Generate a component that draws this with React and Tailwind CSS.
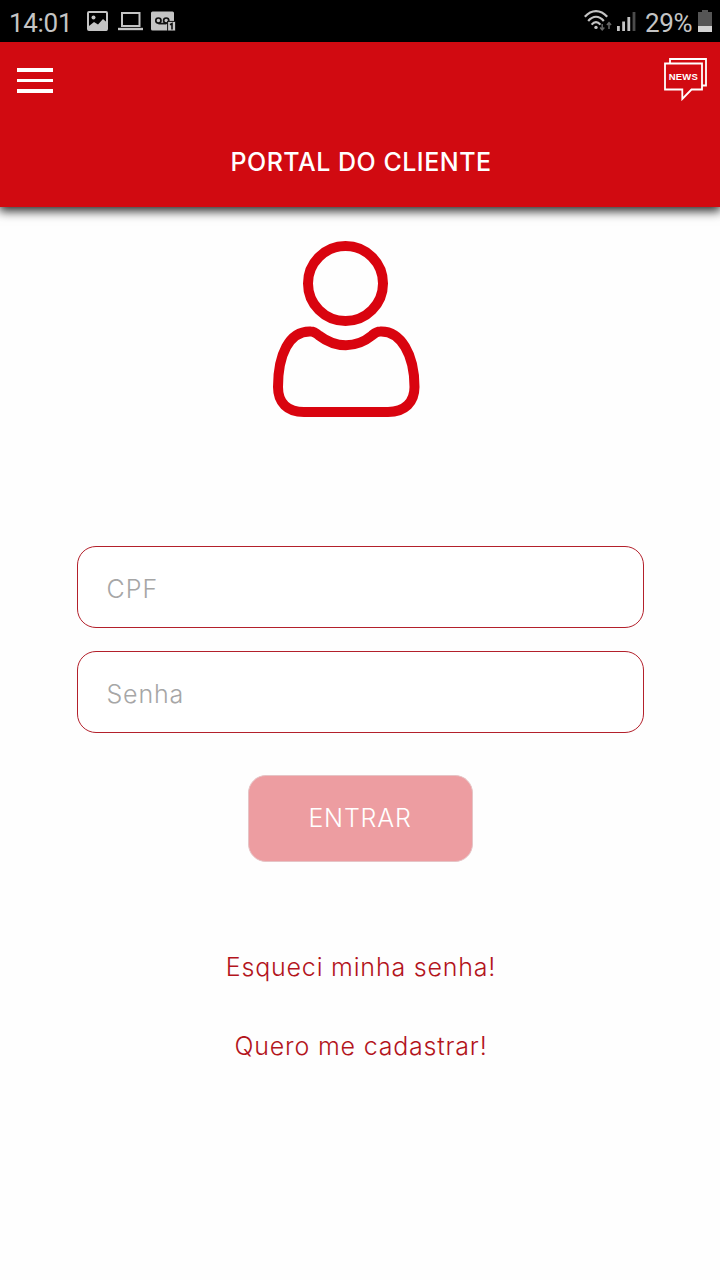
import React, { useState } from 'react';

const StatusBar = () => {
  return (
    <div className="h-[42px] bg-black text-[#c4c4c4] flex items-center justify-between pl-[9px] pr-2 font-[Roboto,sans-serif]">
      <div className="flex items-center">
        <span className="w-[66px] text-[26px] leading-[42px] tracking-[-0.3px] whitespace-nowrap pt-[3px]">14:01</span>
        {/* Picture */}
        <svg className="ml-3 w-[21px] h-5" viewBox="0 0 21 20" fill="none">
          <rect x="1" y="1" width="19" height="18" rx="1" stroke="currentColor" strokeWidth="2" />
          <circle cx="6.5" cy="6.5" r="2" fill="currentColor" />
          <path d="M2 15l5-4 4 2.500 5-5.500 4 3.500v8H2z" fill="currentColor" />
        </svg>
        {/* Laptop */}
        <svg className="ml-2.5 w-[25px] h-5" viewBox="0 0 25 20" fill="none" stroke="currentColor">
          <rect x="4" y="2" width="17.5" height="13" strokeWidth="2" />
          <path d="M0 18h25" strokeWidth="2.4" />
        </svg>
        {/* Voicemail */}
        <svg className="ml-2 w-[25px] h-5" viewBox="0 0 25 20" fill="none">
          <rect x="0" y="0.5" width="23" height="19" rx="1.5" fill="currentColor" />
          <g stroke="#111" strokeWidth="1.7">
            <circle cx="7.4" cy="9.6" r="2.6" />
            <circle cx="15.2" cy="9.6" r="2.6" />
            <path d="M7.4 12.6h8" />
          </g>
          <rect x="16.6" y="10.4" width="8" height="9.6" fill="currentColor" stroke="#111" strokeWidth="1" />
          <path d="M19 13.8l2-1.2v6" stroke="#111" strokeWidth="1.6" />
        </svg>
      </div>

      <div className="flex items-center">
        {/* Wifi */}
        <svg className="w-[28px] h-[22px]" viewBox="0 0 28 22" fill="none" stroke="currentColor" strokeWidth="2.2">
          <path d="M0.8 6.8C7.5-0.8 16.5-0.8 23.2 6.8" />
          <path d="M4.2 11C9 5.3 15 5.3 19.8 11" />
          <path d="M7.6 14.6c2.8-3.2 6-3.2 8.8 0" />
          <circle cx="12" cy="17.4" r="1.7" fill="currentColor" stroke="none" />
          <path d="M18.2 14v6M16.1 17.6l2.1 2.3 2.1-2.3M25 19v-6M22.9 15l2.1-2.3 2.1 2.3" stroke="#666" strokeWidth="1.5" />
        </svg>
        {/* Signal */}
        <svg className="ml-[5px] mr-0.5 w-[19px] h-5" viewBox="0 0 19 20" fill="currentColor">
          <rect x="0" y="15" width="2.8" height="5" />
          <rect x="5.2" y="10.5" width="2.8" height="9.5" />
          <rect x="10.4" y="6" width="2.8" height="14" />
          <rect x="15.6" y="1" width="2.8" height="19" fill="#4b4b4b" />
        </svg>
        <span className="ml-[7px] w-[49px] text-[26px] leading-[42px] tracking-[-0.3px] whitespace-nowrap pt-[3px]">29%</span>
        {/* Battery */}
        <svg className="ml-1 w-3.5 h-[22px]" viewBox="0 0 14 22">
          <path d="M4 0h6v2h4v20H0V2h4z" fill="#555" />
          <rect x="0" y="16" width="14" height="6" fill="#d2d2d2" />
        </svg>
      </div>
    </div>
  );
};

const NewsIcon = () => (
  <svg className="w-[43px] h-[44px]" viewBox="0 0 43 44" fill="none" stroke="#fff" strokeWidth="1.8">
    <path d="M6 6V2h36v26.500h-4" />
    <path d="M1 6.500h37v26H27.500L18.300 42v-9.500H1z" />
    <text x="19.3" y="23" textAnchor="middle" textLength="29" fontSize="9.5" fontWeight="700" fontFamily="Liberation Sans, sans-serif" fill="#fff" stroke="none">
      NEWS
    </text>
  </svg>
);

const Header = () => {
  return (
    <header className="h-[165px] bg-[#d10a11] shadow-[0_3px_10px_1px_rgba(0,0,0,0.85)]">
      <div className="flex items-start justify-between pl-[17px] pr-[13px] pt-[15px]">
        <button aria-label="Menu" className="mt-[11px] flex flex-col gap-[7px]">
          <span className="block w-9 h-[3.5px] bg-white"></span>
          <span className="block w-9 h-[3.5px] bg-white"></span>
          <span className="block w-9 h-[3.5px] bg-white"></span>
        </button>
        <button aria-label="News">
          <NewsIcon />
        </button>
      </div>
      <h1 className="mt-[43px] text-center text-white text-[25px] leading-9 font-medium whitespace-nowrap tracking-[0.5px] pl-0.5">
        PORTAL DO CLIENTE
      </h1>
    </header>
  );
};

const inputClass =
  'w-full h-[82px] rounded-[19px] border-[1.5px] border-[#b3202b] bg-white px-[29px] pt-[3px] text-[25px] font-[330] text-gray-700 placeholder:text-[#a6a6a6] outline-none';

const linkClass = 'text-[25px] leading-9 font-[350] text-[#b3141c] whitespace-nowrap tracking-[0.8px] pl-0.5';

const App = () => {
  const [cpf, setCpf] = useState('');
  const [senha, setSenha] = useState('');

  return (
    <div className="w-[720px] h-[1280px] bg-[#fefefe] overflow-hidden font-[Inter,sans-serif]">
      <StatusBar />
      <Header />

      <main className="flex flex-col items-center">
        {/* User icon */}
        <svg className="mt-[34px] mr-[27px] w-[148px] h-[178px]" viewBox="0 0 148 178" fill="none" stroke="#d9040f" strokeWidth="10">
          <circle cx="72.5" cy="42.5" r="37.5" />
          <path d="M38 90.500C16 89.500 5 114 5 146c0 15 9 25 26 25h84c17 0 26.500-10 26.500-25 0-32-13.500-56.500-34.500-55.500-3.500 0-5 1.500-8 4-16 13-36 13-53 0-3-2.500-5-4-8-4z" />
        </svg>

        <form className="mt-[127px] w-[567px] flex flex-col items-center" onSubmit={(e) => e.preventDefault()}>
          <input
            className={`${inputClass} tracking-[1px]`}
            placeholder="CPF"
            value={cpf}
            onChange={(e) => setCpf(e.target.value)}
          />
          <input
            className={`${inputClass} mt-[23px] tracking-[0.8px]`}
            type="password"
            placeholder="Senha"
            value={senha}
            onChange={(e) => setSenha(e.target.value)}
          />
          <button className="mt-[42px] w-[225px] h-[87px] rounded-[18px] border-[1.5px] border-[#e6c4c6] bg-[#ed9da1] text-white text-[25px] font-[330] tracking-[0.8px]">
            ENTRAR
          </button>
        </form>

        <a href="#" className={`${linkClass} mt-[87px]`}>
          Esqueci minha senha!
        </a>
        <a href="#" className={`${linkClass} mt-[43px]`}>
          Quero me cadastrar!
        </a>
      </main>
    </div>
  );
};

export default App;
